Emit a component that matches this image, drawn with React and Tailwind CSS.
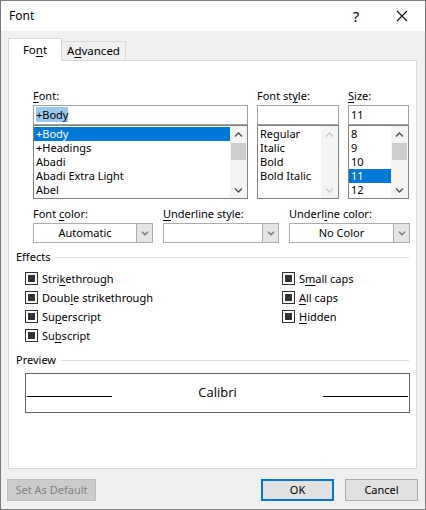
import React from "react";

const FONT = "font-['Noto_Sans','Open_Sans',sans-serif]";

function U({ children }) {
  return <span className="underline underline-offset-[2px]">{children}</span>;
}

function Chevron({ dir = "down", color = "#606060", w = 9 }) {
  return (
    <svg width={w} height="6" viewBox="0 0 9 6" fill="none">
      {dir === "down" ? (
        <path d="M1 1.5 L4.5 5 L8 1.5" stroke={color} strokeWidth="1.4" />
      ) : (
        <path d="M1 4.5 L4.5 1 L8 4.5" stroke={color} strokeWidth="1.4" />
      )}
    </svg>
  );
}

function ListBox({ items, selected, disabled, width }) {
  return (
    <div className={`flex h-[74px] border border-[#828282] bg-white ${width}`}>
      <div className="flex-1 flex flex-col pt-[1px] overflow-hidden">
        {items.map((it) => (
          <div
            key={it}
            className={`h-[14px] leading-[14px] pl-[2px] whitespace-nowrap overflow-hidden ${
              it === selected ? "bg-[#0078d7] text-white" : ""
            }`}
          >
            {it}
          </div>
        ))}
      </div>
      {/* scrollbar */}
      <div className="w-[17px] bg-[#f4f4f4] flex flex-col items-center">
        <div className="h-[17px] flex items-center justify-center">
          <Chevron dir="up" color={disabled ? "#c8c8c8" : "#505050"} />
        </div>
        <div className="flex-1 w-full px-[1px]">
          {!disabled && <div className="h-[17px] bg-[#cdcdcd]" />}
        </div>
        <div className="h-[17px] flex items-center justify-center">
          <Chevron dir="down" color={disabled ? "#c8c8c8" : "#505050"} />
        </div>
      </div>
    </div>
  );
}

function Combo({ value, width }) {
  return (
    <div className={`flex h-[20px] border border-[#adadad] bg-white ${width}`}>
      <div className="flex-1 text-center leading-[18px]">{value}</div>
      <div className="w-[16px] border-l border-[#adadad] bg-[#e5e5e5] flex items-center justify-center">
        <Chevron color="#707070" w={8} />
      </div>
    </div>
  );
}

function Check({ children }) {
  return (
    <div className="h-[19px] flex items-center gap-[4px]">
      <div className="w-[13px] h-[13px] border border-[#333333] bg-white flex items-center justify-center">
        <div className="w-[7px] h-[7px] bg-[#333333]" />
      </div>
      <span className="leading-[14px]">{children}</span>
    </div>
  );
}

function Group({ title }) {
  return (
    <div className="h-[14px] flex items-center gap-[5px] pl-[7px] pr-[7px]">
      <span className="leading-[14px]">{title}</span>
      <div className="flex-1 h-px bg-[#dcdcdc]" />
    </div>
  );
}

export default function App() {
  return (
    <div
      className={`w-[426px] h-[510px] border border-[#7a7a7a] bg-[#f0f0f0] flex flex-col text-[11px] text-black ${FONT}`}
    >
      {/* TITLE BAR */}
      <div className="h-[30px] bg-white flex items-center pl-[8px] text-[12px]">
        <span className="flex-1">Font</span>
        <span className="text-[15px] w-[46px] text-center">?</span>
        <span className="w-[46px] flex justify-center">
          <svg width="12" height="12" viewBox="0 0 12 12">
            <path d="M1 1 L11 11 M11 1 L1 11" stroke="#111" strokeWidth="1.1" />
          </svg>
        </span>
      </div>

      {/* TABS */}
      <div className="mt-[7px] h-[22px] flex items-end pl-[7px] text-[11.5px]">
        <div className="relative z-10 h-[23px] w-[54px] mb-[-1px] bg-white border-l border-t border-r border-[#d9d9d9] flex items-center justify-center">
          Fo<U>n</U>t
        </div>
        <div className="h-[19px] w-[64px] border-t border-r border-[#d9d9d9] flex items-center justify-center">
          A<U>d</U>vanced
        </div>
      </div>

      {/* PANEL */}
      <div className="ml-[7px] w-[409px] h-[409px] border border-[#d9d9d9] bg-white flex flex-col">
        <div className="mt-[28px] pl-[24px] flex gap-[9px]">
          <div className="flex flex-col w-[215px]">
            <div className="h-[14px] leading-[14px] mb-[2px]">
              <U>F</U>ont:
            </div>
            <div className="h-[20px] border border-[#a0a0a0] pl-[2px] leading-[18px]">
              <span className="bg-[#99c9ef]">+Body</span>
            </div>
            <ListBox
              width="w-[215px]"
              items={["+Body", "+Headings", "Abadi", "Abadi Extra Light", "Abel"]}
              selected="+Body"
            />
          </div>
          <div className="flex flex-col w-[82px]">
            <div className="h-[14px] leading-[14px] mb-[2px]">
              Font st<U>y</U>le:
            </div>
            <div className="h-[20px] border border-[#a0a0a0]" />
            <ListBox
              width="w-[82px]"
              items={["Regular", "Italic", "Bold", "Bold Italic"]}
              disabled
            />
          </div>
          <div className="flex flex-col w-[61px]">
            <div className="h-[14px] leading-[14px] mb-[2px]">
              <U>S</U>ize:
            </div>
            <div className="h-[20px] border border-[#a0a0a0] pl-[2px] leading-[18px]">11</div>
            <ListBox
              width="w-[61px]"
              items={["8", "9", "10", "11", "12"]}
              selected="11"
            />
          </div>
        </div>

        {/* COLOR / UNDERLINE */}
        <div className="mt-[8px] pl-[24px] flex gap-[10px]">
          <div className="flex flex-col">
            <div className="h-[14px] leading-[14px] mb-[2px]">
              Font <U>c</U>olor:
            </div>
            <Combo value="Automatic" width="w-[120px]" />
          </div>
          <div className="flex flex-col">
            <div className="h-[14px] leading-[14px] mb-[2px]">
              <U>U</U>nderline style:
            </div>
            <Combo value="" width="w-[116px]" />
          </div>
          <div className="flex flex-col">
            <div className="h-[14px] leading-[14px] mb-[2px]">
              Underl<U>i</U>ne color:
            </div>
            <Combo value="No Color" width="w-[121px]" />
          </div>
        </div>

        {/* EFFECTS */}
        <div className="mt-[7px]">
          <Group title="Effects" />
        </div>
        <div className="mt-[5px] pl-[16px] flex">
          <div className="w-[257px] flex flex-col">
            <Check>
              Stri<U>k</U>ethrough
            </Check>
            <Check>
              Doub<U>l</U>e strikethrough
            </Check>
            <Check>
              Su<U>p</U>erscript
            </Check>
            <Check>
              Su<U>b</U>script
            </Check>
          </div>
          <div className="flex flex-col">
            <Check>
              S<U>m</U>all caps
            </Check>
            <Check>
              <U>A</U>ll caps
            </Check>
            <Check>
              <U>H</U>idden
            </Check>
          </div>
        </div>

        {/* PREVIEW */}
        <div className="mt-[8px]">
          <Group title="Preview" />
        </div>
        <div className="mt-[6px] ml-[16px] w-[385px] h-[40px] border border-[#646464] flex items-center px-[1px]">
          <div className="w-[85px] h-px bg-black mt-[6px]" />
          <div className="flex-1 text-center text-[13px] font-['Open_Sans',sans-serif]">Calibri</div>
          <div className="w-[85px] h-px bg-black mt-[6px]" />
        </div>
      </div>

      {/* BUTTONS */}
      <div className="mt-[10px] flex pl-[6px] pr-[7px] gap-[11px]">
        <button className="h-[22px] w-[89px] border border-[#bfbfbf] bg-[#cccccc] text-[#838383]">
          Set As Default
        </button>
        <div className="flex-1" />
        <button className="h-[22px] w-[73px] border-2 border-[#0078d7] bg-[#e1e1e1]">OK</button>
        <button className="h-[22px] w-[73px] border border-[#adadad] bg-[#e1e1e1]">Cancel</button>
      </div>
    </div>
  );
}
